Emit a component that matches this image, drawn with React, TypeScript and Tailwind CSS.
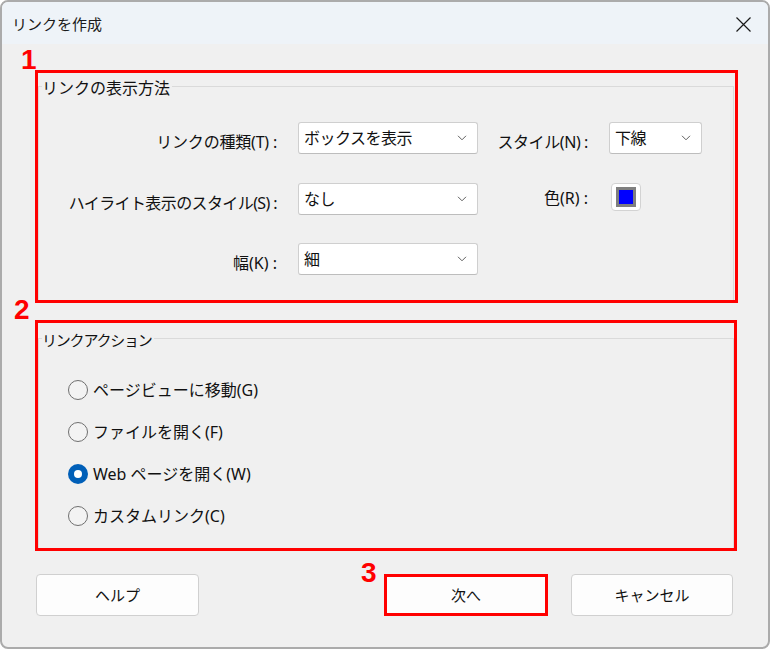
import React from "react";

const FONT = "font-['Noto_Sans','Noto_Sans_CJK_JP',sans-serif]";

function Chevron() {
  return (
    <svg width="10" height="6" viewBox="0 0 10 6" className="shrink-0">
      <path d="M1 0.8 L5 4.8 L9 0.8" fill="none" stroke="#606060" strokeWidth="1" />
    </svg>
  );
}

function Dropdown({ value, width }: { value: string; width: string }) {
  return (
    <div
      className={`${width} h-[32px] shrink-0 flex items-center justify-between bg-white border border-[#cfcfcf] border-b-[#bdbdbd] rounded-[3px] pl-[5px] pr-[10px] text-[16px] tracking-[-0.5px] leading-[20px] text-[#111]`}
    >
      <span>{value}</span>
      <Chevron />
    </div>
  );
}

function Radio({ label, checked }: { label: string; checked?: boolean }) {
  return (
    <div className="flex items-center h-[24px]">
      {checked ? (
        <div className="w-[20px] h-[20px] rounded-full bg-[#005fb8] flex items-center justify-center shrink-0">
          <div className="w-[8px] h-[8px] rounded-full bg-white" />
        </div>
      ) : (
        <div className="w-[20px] h-[20px] rounded-full border border-[#6f6f6f] bg-[#f3f3f3] shrink-0" />
      )}
      <span className="ml-[5px] text-[16px] leading-[20px] text-[#111]">{label}</span>
    </div>
  );
}

function Num({ n, cls }: { n: string; cls: string }) {
  return (
    <span
      className={`absolute ${cls} font-['Liberation_Sans',Arial,sans-serif] font-bold text-[28px] leading-none text-[#ff0000]`}
    >
      {n}
    </span>
  );
}

export default function App() {
  return (
    <div className={`w-[770px] h-[649px] bg-white ${FONT}`}>
      <div className="w-full h-full rounded-[8px] border-2 border-[#ababab] bg-[#f0f0f0] flex flex-col overflow-hidden">
        {/* Title bar */}
        <div className="h-[42px] shrink-0 bg-[#eef3f8] flex items-center justify-between pl-[10px] pr-[17px]">
          <span className="text-[15px] leading-[20px] text-[#1a1a1a] pt-[2px]">リンクを作成</span>
          <svg width="15" height="15" viewBox="0 0 15 15" className="mt-[2px]">
            <path d="M0.5 0.5 L14.5 14.5 M14.5 0.5 L0.5 14.5" stroke="#1a1a1a" strokeWidth="1.2" />
          </svg>
        </div>

        {/* Box 1 */}
        <div className="relative mt-[26px] ml-[33px] w-[703px] h-[233px] shrink-0 border-[3px] border-[#ff0000] flex flex-col">
          <Num n="1" cls="left-[-17px] top-[-27px]" />
          <fieldset className="mt-[1px] mr-[1px] flex-1 border border-b-0 border-[#dadada] min-w-0">
            <legend className="ml-[3px] pr-[2px] pt-[4px] text-[16px] leading-[20px] text-[#111]">
              リンクの表示方法
            </legend>
            <div className="pt-[24px] flex flex-col">
              <div className="flex h-[32px]">
                <div className="w-[238px] text-right pt-[10px] text-[16px] tracking-[-0.2px] leading-[20px] text-[#111]">
                  リンクの種類(T) :
                </div>
                <div className="ml-[21px]">
                  <Dropdown value="ボックスを表示" width="w-[180px]" />
                </div>
                <div className="w-[110px] text-right pt-[10px] text-[16px] tracking-[-0.4px] leading-[20px] text-[#111]">
                  スタイル(N) :
                </div>
                <div className="ml-[21px]">
                  <Dropdown value="下線" width="w-[93px]" />
                </div>
              </div>
              <div className="flex h-[32px] mt-[29px]">
                <div className="w-[238px] text-right pt-[10px] text-[16px] tracking-[-0.6px] leading-[20px] text-[#111]">
                  ハイライト表示のスタイル(S) :
                </div>
                <div className="ml-[21px]">
                  <Dropdown value="なし" width="w-[180px]" />
                </div>
                <div className="w-[110px] text-right pt-[5px] text-[16px] leading-[20px] text-[#111]">
                  色(R) :
                </div>
                <div className="ml-[23px] w-[30px] h-[28px] bg-white border border-[#d3d3d3] rounded-[4px] flex items-center justify-center">
                  <div className="w-[20px] h-[20px] border-[3px] border-[#7f7f7f] bg-[#0000ff]" />
                </div>
              </div>
              <div className="flex h-[32px] mt-[28px]">
                <div className="w-[238px] text-right pt-[10px] text-[16px] leading-[20px] text-[#111]">
                  幅(K) :
                </div>
                <div className="ml-[21px]">
                  <Dropdown value="細" width="w-[180px]" />
                </div>
              </div>
            </div>
          </fieldset>
        </div>

        {/* Box 2 */}
        <div className="relative mt-[17px] ml-[33px] w-[702px] h-[231px] shrink-0 border-[3px] border-[#ff0000] flex flex-col">
          <Num n="2" cls="left-[-24px] top-[-27px]" />
          <fieldset className="mt-[3px] mr-[0px] flex-1 border border-b-0 border-[#dadada] min-w-0">
            <legend className="ml-[3px] pr-[2px] pt-[4px] text-[15px] tracking-[-1.2px] leading-[20px] text-[#111]">
              リンクアクション
            </legend>
            <div className="pt-[28px] pl-[29px] flex flex-col gap-[18px]">
              <Radio label="ページビューに移動(G)" />
              <Radio label="ファイルを開く(F)" />
              <Radio label="Web ページを開く(W)" checked />
              <Radio label="カスタムリンク(C)" />
            </div>
          </fieldset>
        </div>

        {/* Buttons */}
        <div className="mt-[23px] flex items-start pl-[34px] pr-[35px]">
          <button className="w-[163px] h-[42px] bg-[#fdfdfd] border border-[#d0d0d0] rounded-[4px] text-[15px] leading-[20px] text-[#111]">
            ヘルプ
          </button>
          <div className="flex-1" />
          <div className="relative">
            <Num n="3" cls="left-[-23px] top-[-15px]" />
            <button className="w-[164px] h-[42px] bg-[#fdfdfd] border-[3px] border-[#ff0000] text-[15px] leading-[20px] text-[#111]">
              次へ
            </button>
          </div>
          <button className="ml-[23px] w-[162px] h-[42px] bg-[#fdfdfd] border border-[#d0d0d0] rounded-[4px] text-[15px] leading-[20px] text-[#111]">
            キャンセル
          </button>
        </div>
      </div>
    </div>
  );
}
